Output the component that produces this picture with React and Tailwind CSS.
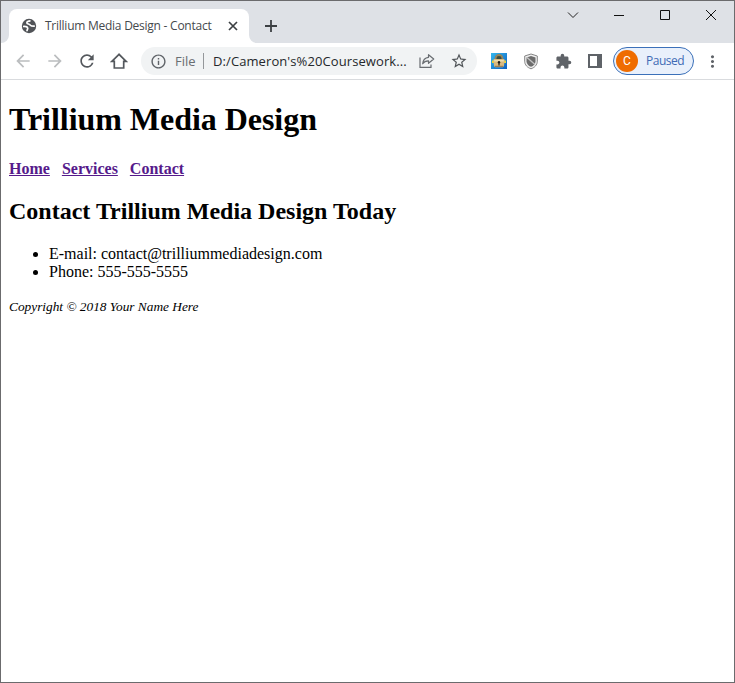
import {
  MdArrowBack,
  MdArrowForward,
  MdRefresh,
  MdStarBorder,
  MdExtension,
  MdMoreVert,
  MdInfoOutline,
} from "react-icons/md";

const uiFont = "font-['Open_Sans','Noto_Sans',sans-serif]";

function ToolbarSlot({ children }) {
  return <div className="flex h-full w-8 shrink-0 items-center justify-center">{children}</div>;
}

function TabStrip() {
  return (
    <div className="flex h-[42px] items-end bg-[#dee1e6]">
      <svg width="8" height="8" viewBox="0 0 8 8" className="shrink-0">
        <path d="M8 0v8H0a8 8 0 0 0 8-8z" fill="#fff" />
      </svg>
      <div className="flex h-[34px] w-60 shrink-0 items-center rounded-t-lg bg-white pl-3">
        <svg width="16" height="16" viewBox="0 0 16 16" className="shrink-0" fill="none" stroke="#fff" strokeWidth="1.700">
          <circle cx="8" cy="8" r="7.200" fill="#505357" stroke="none" />
          <path d="M9.500 2.900C7.300 2.900 5.500 3.600 5.900 5c.4 1.300 2.700.7 3.600 2.300.5.900 1.600 1 4.300.9" />
          <path d="M2 8.500c2.400-.2 4.400.1 4.700 1.700.2 1.200-.8 1.300-.7 3" />
        </svg>
        <span className="ml-2 w-[176px] whitespace-nowrap text-[12px] leading-4 tracking-[-0.25px] text-[#45494d]">
          Trillium Media Design - Contact
        </span>
        <svg width="24" height="16" viewBox="0 0 24 16" className="shrink-0">
          <path d="M8 4l8 8M16 4l-8 8" stroke="#3c4043" strokeWidth="1.7" />
        </svg>
      </div>
      <svg width="8" height="8" viewBox="0 0 8 8" className="shrink-0">
        <path d="M0 0v8h8a8 8 0 0 1-8-8z" fill="#fff" />
      </svg>
      <svg width="28" height="34" viewBox="0 0 28 34" className="shrink-0">
        <path d="M14 11v12M8 17h12" stroke="#3c4043" strokeWidth="1.8" />
      </svg>
      <div className="ml-auto flex self-start">
        <svg width="46" height="28" viewBox="0 0 46 28">
          <path d="M18 11.5l5 5 5-5" fill="none" stroke="#222" />
        </svg>
        <svg width="46" height="28" viewBox="0 0 46 28">
          <path d="M18 14.5h10" stroke="#111" />
        </svg>
        <svg width="46" height="28" viewBox="0 0 46 28">
          <path d="M18.500 9.500h9v9h-9z" fill="none" stroke="#111" />
        </svg>
        <svg width="46" height="28" viewBox="0 0 46 28">
          <path d="M18 9l10 10M28 9L18 19" stroke="#111" />
        </svg>
      </div>
    </div>
  );
}

function AddressBar() {
  return (
    <div className="ml-[6px] flex h-7 w-[336px] shrink-0 items-center rounded-full bg-[#f1f3f4]">
      <MdInfoOutline className="ml-[9px] h-[17px] w-[17px] shrink-0 text-[#5f6368]" />
      <span className="ml-2 w-7 text-[13px] leading-5 text-[#6a6e72]">File</span>
      <span className="h-4 w-px bg-[#94979a]" />
      <span className="ml-[9px] w-[198px] whitespace-nowrap text-[13px] leading-5 tracking-[0.09px] text-[#25282b]">
        D:/Cameron's%20Coursework...
      </span>
      <ToolbarSlot>
        <svg width="16" height="16" viewBox="0 0 16 16" fill="none" stroke="#686c70" strokeWidth="1.200">
          <path d="M1 4.500V14.400h11V11.500" />
          <path d="M9.500 1.700l5.200 4.300-5.200 4.300V7.800C6.700 7.700 5 8.700 3.700 10.800 4 7.200 6 4.700 9.500 4.300z" strokeLinejoin="round" />
        </svg>
      </ToolbarSlot>
      <ToolbarSlot>
        <MdStarBorder className="h-[18px] w-[18px] text-[#505458]" />
      </ToolbarSlot>
    </div>
  );
}

function LockExtension() {
  return (
    <svg width="16" height="16" viewBox="0 0 16 16">
      <defs>
        <linearGradient id="sky" x1="0" y1="0" x2="1" y2="1">
          <stop offset="0" stopColor="#35b8ee" />
          <stop offset="1" stopColor="#0d5fc0" />
        </linearGradient>
      </defs>
      <rect width="16" height="16" fill="url(#sky)" />
      <path d="M1 7.500h3v2.500H1zM12 7.500h3v2.500h-3z" fill="#ead52d" />
      <path d="M4.600 7V5.200a3.400 3.200 0 0 1 6.800 0V7" fill="#3a4c42" stroke="#94845a" strokeWidth="1.800" />
      <path d="M3.500 6h9c.8 0 1.200.7 1.200 1.500L13 12.500c-.2 1.200-.9 1.800-2 1.800H5c-1.100 0-1.800-.6-2-1.800L2.300 7.500C2.300 6.700 2.700 6 3.500 6z" fill="#d8b980" />
      <path d="M3.200 7h9.600v1.500H3.200z" fill="#efdcae" />
      <path d="M4 12.800h8v1H4z" fill="#917044" />
      <circle cx="8" cy="9.200" r="1.200" fill="#211c18" />
      <path d="M7.400 9h1.200v3.500H7.400z" fill="#211c18" />
    </svg>
  );
}

function ShieldExtension() {
  return (
    <svg width="16" height="17" viewBox="0 0 16 17">
      <path d="M8 1l6.300 2v5.200c0 3.700-2.600 6.300-6.300 7.600-3.700-1.300-6.300-3.900-6.300-7.600V3z" fill="#eee" stroke="#858585" />
      <path d="M8 3l4.500 1.400v3.800c0 2.600-1.800 4.500-4.500 5.600-2.700-1.100-4.500-3-4.500-5.600V4.400z" fill="#6c6c6c" />
      <path d="M4 4.500l8 7" stroke="#c2c2c2" strokeWidth="1.300" />
    </svg>
  );
}

function Toolbar() {
  return (
    <div className="flex h-[37px] items-center border-b border-[#d9dbde] pl-[6px]">
      <ToolbarSlot>
        <MdArrowBack className="h-5 w-5 text-[#bbbdbf]" />
      </ToolbarSlot>
      <ToolbarSlot>
        <MdArrowForward className="h-5 w-5 text-[#bbbdbf]" />
      </ToolbarSlot>
      <ToolbarSlot>
        <MdRefresh className="h-5 w-5 text-[#54585d]" />
      </ToolbarSlot>
      <ToolbarSlot>
        <svg width="18" height="18" viewBox="0 0 18 18" fill="none" stroke="#54585d" strokeWidth="1.700">
          <path d="M9 2.300L1.900 9.400H4.300V16H13.700V9.400H16.100z" />
        </svg>
      </ToolbarSlot>
      <AddressBar />
      <div className="ml-[6px] flex h-full">
        <ToolbarSlot>
          <LockExtension />
        </ToolbarSlot>
        <ToolbarSlot>
          <ShieldExtension />
        </ToolbarSlot>
        <ToolbarSlot>
          <MdExtension className="h-[17px] w-[17px] text-[#5f6368]" />
        </ToolbarSlot>
        <ToolbarSlot>
          <svg width="14" height="14" viewBox="0 0 14 14">
            <path d="M0 0h14v14H0zM2 2v10h7V2z" fill="#5f6368" fillRule="evenodd" />
          </svg>
        </ToolbarSlot>
      </div>
      <div className="ml-[2px] flex h-7 w-[81px] shrink-0 items-center rounded-full border border-[#3b70b9] bg-[#e9f0fb] pl-[2px]">
        <span className="flex h-[22px] w-[22px] shrink-0 items-center justify-center rounded-full bg-[#ef6c00] font-[Roboto,sans-serif] text-[12px] text-white">
          C
        </span>
        <span className="ml-2 text-[12px] leading-4 tracking-[-0.5px] text-[#3f6bb5]">Paused</span>
      </div>
      <MdMoreVert className="ml-[9px] h-[19px] w-[19px] shrink-0 text-[#5f6368]" />
    </div>
  );
}

function Page() {
  return (
    <main className="px-2 pt-[21px] font-['Liberation_Serif',serif] text-black">
      <h1 className="text-[32px] font-bold leading-[37px] tracking-[-0.04px]">Trillium Media Design</h1>
      <nav className="mt-[22px] flex gap-3 text-[16px] font-bold leading-[18px] text-[#551a8b]">
        <a className="underline" href="#home">Home</a>
        <a className="underline" href="#services">Services</a>
        <a className="underline" href="#contact">Contact</a>
      </nav>
      <h2 className="mt-5 text-[24px] font-bold leading-[27px]">Contact Trillium Media Design Today</h2>
      <ul className="mt-5 list-disc pl-10 text-[16px] leading-[18px]">
        <li>E-mail: contact@trilliummediadesign.com</li>
        <li>Phone: 555-555-5555</li>
      </ul>
      <footer className="mt-[18px] text-[13.333px] italic leading-[15px]">Copyright © 2018 Your Name Here</footer>
    </main>
  );
}

export default function App() {
  return (
    <div className={`h-[683px] w-[735px] overflow-hidden border border-[#6b6b6d] bg-white ${uiFont}`}>
      <TabStrip />
      <Toolbar />
      <Page />
    </div>
  );
}
